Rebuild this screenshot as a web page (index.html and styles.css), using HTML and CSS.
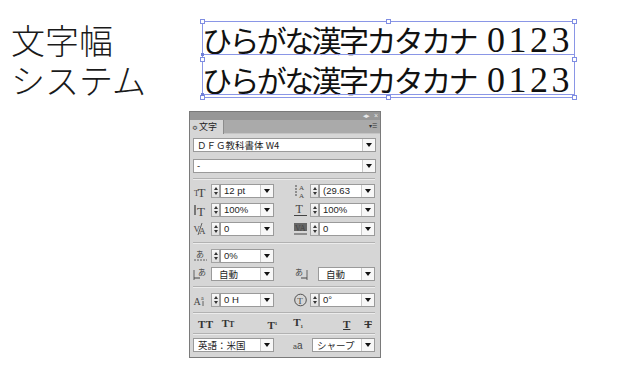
FILE: index.html
```html
<!DOCTYPE html>
<html lang="ja">
<head>
<meta charset="utf-8">
<link rel="stylesheet" href="styles.css">
</head>
<body>
<div class="page">
  <div class="top">
    <div class="label"><div class="lbl">文字幅</div><div class="lbl">システム</div></div>
    <div class="sample">
      <div class="line"><span class="kana">ひらがな漢字カタカナ</span><span class="num">0123</span></div>
      <div class="line"><span class="kana">ひらがな漢字カタカナ</span><span class="num">0123</span></div>
      <div class="sel">
        <div class="base b1"></div>
        <div class="base b2"></div>
        <span class="h h-tl"></span><span class="h h-tm"></span><span class="h h-tr"></span>
        <span class="h h-ml"></span><span class="h h-mr"></span>
        <span class="h h-bl"></span><span class="h h-bm"></span><span class="h h-br"></span>
        <span class="dot d1"></span><span class="dot d2"></span>
      </div>
    </div>
  </div>

  <div class="panel">
    <div class="titlebar"><span class="tb-ico">◂▸</span><span class="tb-ico">×</span></div>
    <div class="tabrow">
      <div class="tab"><span class="tab-arr">≎</span>文字</div>
      <div class="menu">▾☰</div>
    </div>
    <div class="body">
      <div class="sec sec-a">
        <div class="field wide"><span class="val cjk">ＤＦＧ教科書体 W4</span><span class="btn"><i class="tri"></i></span></div>
        <div class="field wide"><span class="val">-</span><span class="btn"><i class="tri"></i></span></div>
      </div>
      <div class="sep"></div>
      <div class="sec sec-b">
        <div class="row">
          <div class="half">
            <svg class="ico" viewBox="0 0 15 14"><text x="1" y="12" font-size="8">T</text><text x="4.5" y="13" font-size="13">T</text></svg>
            <span class="spin"><i class="up"></i><i class="dn"></i></span>
            <div class="field f-l"><span class="val">12 pt</span><span class="btn"><i class="tri"></i></span></div>
          </div>
          <div class="half">
            <svg class="ico" viewBox="0 0 15 14"><text x="6" y="6" font-size="7">A</text><text x="6" y="13.5" font-size="7">A</text><line x1="3" y1="1" x2="3" y2="13" stroke="#444" stroke-width="1" stroke-dasharray="2 1"/></svg>
            <span class="spin"><i class="up"></i><i class="dn"></i></span>
            <div class="field f-r"><span class="val">(29.63</span><span class="btn"><i class="tri"></i></span></div>
          </div>
        </div>
        <div class="row">
          <div class="half">
            <svg class="ico" viewBox="0 0 15 14"><line x1="2" y1="2" x2="2" y2="12" stroke="#444" stroke-width="1.3"/><text x="4" y="13" font-size="13">T</text></svg>
            <span class="spin"><i class="up"></i><i class="dn"></i></span>
            <div class="field f-l"><span class="val">100%</span><span class="btn"><i class="tri"></i></span></div>
          </div>
          <div class="half">
            <svg class="ico" viewBox="0 0 15 14"><text x="2.5" y="10" font-size="12">T</text><line x1="1" y1="12.5" x2="14" y2="12.5" stroke="#444" stroke-width="1"/></svg>
            <span class="spin"><i class="up"></i><i class="dn"></i></span>
            <div class="field f-r"><span class="val">100%</span><span class="btn"><i class="tri"></i></span></div>
          </div>
        </div>
        <div class="row">
          <div class="half">
            <svg class="ico" viewBox="0 0 15 14"><text x="0.5" y="10" font-size="9" font-family="Liberation Sans">V</text><text x="6" y="12" font-size="9" font-family="Liberation Sans">A</text><line x1="5" y1="13" x2="9" y2="1" stroke="#444" stroke-width="0.8"/></svg>
            <span class="spin"><i class="up"></i><i class="dn"></i></span>
            <div class="field f-l"><span class="val">0</span><span class="btn"><i class="tri"></i></span></div>
          </div>
          <div class="half">
            <svg class="ico" viewBox="0 0 15 14"><rect x="1" y="1" width="13" height="8" fill="#666"/><text x="2" y="8.5" font-size="8" font-family="Liberation Sans" fill="#fff">VA</text><line x1="1" y1="12" x2="14" y2="12" stroke="#444" stroke-width="1"/></svg>
            <span class="spin"><i class="up"></i><i class="dn"></i></span>
            <div class="field f-r"><span class="val">0</span><span class="btn"><i class="tri"></i></span></div>
          </div>
        </div>
      </div>
      <div class="sep"></div>
      <div class="sec sec-c">
        <div class="row">
          <div class="half">
            <svg class="ico" viewBox="0 0 15 14"><text x="3" y="8" font-size="8" class="cj">あ</text><line x1="1" y1="11" x2="14" y2="11" stroke="#444" stroke-width="0.8" stroke-dasharray="2 1"/></svg>
            <span class="spin"><i class="up"></i><i class="dn"></i></span>
            <div class="field f-l"><span class="val">0%</span><span class="btn"><i class="tri"></i></span></div>
          </div>
        </div>
        <div class="row">
          <div class="half">
            <svg class="ico" viewBox="0 0 15 14"><text x="5" y="8" font-size="8" class="cj">あ</text><line x1="1" y1="11" x2="7" y2="11" stroke="#444" stroke-width="1"/><line x1="1" y1="3" x2="1" y2="13" stroke="#444" stroke-width="0.8"/></svg>
            <div class="field f-dl"><span class="val cjk pad">自動</span><span class="btn"><i class="tri"></i></span></div>
          </div>
          <div class="half">
            <svg class="ico" viewBox="0 0 15 14"><text x="2" y="8" font-size="8" class="cj">あ</text><line x1="8" y1="11" x2="14" y2="11" stroke="#444" stroke-width="1"/><line x1="14" y1="3" x2="14" y2="13" stroke="#444" stroke-width="0.8"/></svg>
            <div class="field f-dr"><span class="val cjk pad">自動</span><span class="btn"><i class="tri"></i></span></div>
          </div>
        </div>
      </div>
      <div class="sep"></div>
      <div class="sec sec-d">
        <div class="row">
          <div class="half">
            <svg class="ico" viewBox="0 0 15 14"><text x="0.5" y="12" font-size="10" font-family="Liberation Sans">A</text><text x="8" y="7" font-size="6" font-family="Liberation Sans">a</text><line x1="10" y1="8" x2="10" y2="13" stroke="#444" stroke-width="0.8"/></svg>
            <span class="spin"><i class="up"></i><i class="dn"></i></span>
            <div class="field f-l"><span class="val">0 H</span><span class="btn"><i class="tri"></i></span></div>
          </div>
          <div class="half">
            <svg class="ico" viewBox="0 0 15 14"><circle cx="7.5" cy="7" r="5.8" fill="none" stroke="#444" stroke-width="0.9"/><text x="4.3" y="10.5" font-size="9">T</text></svg>
            <span class="spin"><i class="up"></i><i class="dn"></i></span>
            <div class="field f-r"><span class="val">0°</span><span class="btn"><i class="tri"></i></span></div>
          </div>
        </div>
      </div>
      <div class="sep"></div>
      <div class="sec sec-e">
        <div class="styles">
          <span class="st s1">TT</span>
          <span class="st s2">T<small>T</small></span>
          <span class="st s3">T<sup>1</sup></span>
          <span class="st s4">T<sub>1</sub></span>
          <span class="st s5">T</span>
          <span class="st s6">T</span>
        </div>
      </div>
      <div class="sep"></div>
      <div class="sec sec-f">
        <div class="row">
          <div class="field f-lang"><span class="val cjk pad2">英語：米国</span><span class="btn"><i class="tri"></i></span></div>
          <span class="aa">a<span class="aa2">a</span></span>
          <div class="field f-aa"><span class="val cjk pad2">シャープ</span><span class="btn"><i class="tri"></i></span></div>
        </div>
      </div>
    </div>
  </div>
</div>
</body>
</html>
```

FILE: styles.css
```css
* { box-sizing: border-box; }
html, body { margin: 0; padding: 0; background: #fff; }
body { width: 640px; height: 366px; overflow: hidden; font-family: "Liberation Sans", "Noto Sans CJK JP", sans-serif; }

.page { display: flex; flex-direction: column; }

.top { display: flex; height: 111px; }

.label {
  margin: 20px 0 0 11px;
  width: 191px;
  font-family: "Noto Sans CJK JP", sans-serif;
  font-weight: 300;
  font-size: 34px;
  color: #1a1a1a;
}
.lbl { height: 40px; line-height: 40px; white-space: nowrap; }

.sample { position: relative; margin-top: 19px; }
.line { height: 40px; line-height: 40px; white-space: nowrap; color: #111; }
.kana {
  font-family: "Noto Sans CJK JP", sans-serif;
  font-size: 30px;
  letter-spacing: -2.6px;
}
.num {
  font-family: "Liberation Serif", serif;
  font-size: 36px;
  letter-spacing: 3.5px;
  margin-left: 11px;
}

.sel {
  position: absolute;
  left: 0; top: 2px;
  width: 373px; height: 77px;
  border: 1px solid #8a96e6;
}
.base { position: absolute; left: 0; right: 0; height: 1px; background: #8a96e6; }
.b1 { top: 32px; }
.b2 { top: 72px; }
.h {
  position: absolute; width: 5px; height: 5px;
  background: #fff; border: 1px solid #7f8de2;
}
.h-tl { left: -3px; top: -3px; }
.h-tm { left: 183px; top: -3px; }
.h-tr { right: -3px; top: -3px; }
.h-ml { left: -3px; top: 35px; }
.h-mr { right: -3px; top: 35px; }
.h-bl { left: -3px; bottom: -3px; }
.h-bm { left: 183px; bottom: -3px; }
.h-br { right: -3px; bottom: -3px; }
.dot { position: absolute; left: -2px; width: 3px; height: 3px; background: #6f7fd8; }
.d1 { top: 31px; }
.d2 { top: 71px; }

/* Panel */
.panel {
  margin-left: 189px;
  width: 192px;
  height: 247px;
  border: 1px solid #7a7a7a;
  background: #d6d6d6;
  display: flex;
  flex-direction: column;
}
.titlebar {
  height: 8px;
  background: #979797;
  display: flex;
  justify-content: flex-end;
  align-items: center;
  gap: 5px;
  padding-right: 3px;
}
.tb-ico { font-size: 7px; line-height: 8px; color: #e8e8e8; letter-spacing: -1px; }
.tabrow {
  height: 14px;
  background: #aaaaaa;
  display: flex;
  justify-content: space-between;
  border-bottom: 1px solid #c4c4c4;
}
.tab {
  width: 34px;
  height: 14px;
  background: #d6d6d6;
  font-family: "Noto Sans CJK JP", sans-serif;
  font-size: 9px;
  line-height: 14px;
  color: #222;
  padding-left: 2px;
  border-right: 1px solid #8c8c8c;
}
.tab-arr { font-size: 7px; margin-right: 1px; }
.menu { font-size: 6px; line-height: 12px; color: #333; padding-right: 3px; }

.body { flex: 1; padding: 0 5px 0 3px; }

.sec { display: flex; flex-direction: column; }
.sec-a { padding: 4px 0 5px; gap: 7px; }
.sec-b { padding: 4px 0 6px; gap: 5px; }
.sec-c { padding: 5px 0 5px; gap: 4px; }
.sec-d { padding: 5px 0 5px; }
.sec-e { padding: 4px 0 3px; }
.sec-f { padding: 3px 0 0; }

.sep { height: 2px; border-top: 1px solid #b2b2b2; border-bottom: 1px solid #ececec; }

.row { display: flex; align-items: center; height: 14px; }
.half { display: flex; align-items: center; width: 100px; height: 14px; }
.half + .half { width: 82px; }

.ico { width: 15px; height: 14px; flex: none; overflow: visible; }
.ico text { font-family: "Liberation Serif", serif; fill: #444; }
.ico text.cj { font-family: "Noto Sans CJK JP", sans-serif; }

.spin {
  flex: none;
  width: 9px; height: 14px;
  margin-left: 3px;
  border: 1px solid #a3a3a3;
  background: linear-gradient(#fafafa, #dedede);
  display: flex; flex-direction: column; align-items: center; justify-content: center; gap: 2px;
}
.half + .half .spin { margin-left: 2px; }
.up, .dn { width: 0; height: 0; border-left: 2.5px solid transparent; border-right: 2.5px solid transparent; }
.up { border-bottom: 3px solid #333; }
.dn { border-top: 3px solid #333; }

.field {
  display: flex;
  height: 14px;
  border: 1px solid #9a9a9a;
  background: #fff;
  flex: none;
}
.wide { width: 183px; }
.f-l { width: 54px; }
.f-r { width: 56px; }
.f-dl { width: 63px; margin-left: 3px; }
.f-dr { width: 57px; margin-left: 10px; }
.f-lang { width: 81px; margin-left: 0; }
.f-aa { width: 63px; }

.val {
  flex: 1;
  font-size: 9.5px;
  line-height: 12px;
  padding-left: 3px;
  color: #1e1e1e;
  white-space: nowrap;
  overflow: hidden;
}
.val.cjk { font-family: "Noto Sans CJK JP", sans-serif; font-size: 9.5px; }
.pad { padding-left: 7px; }
.pad2 { padding-left: 4px; }
.btn {
  width: 13px;
  border-left: 1px solid #c9c9c9;
  background: #f7f7f7;
  display: flex; align-items: center; justify-content: center;
}
.tri { width: 0; height: 0; border-left: 3px solid transparent; border-right: 3px solid transparent; border-top: 4px solid #111; }

.styles {
  display: flex;
  align-items: center;
  height: 12px;
  font-family: "Liberation Serif", serif;
  font-weight: bold;
  font-size: 11px;
  color: #333;
}
.st { line-height: 12px; }
.s1 { margin-left: 5px; letter-spacing: 0.5px; }
.s2 { margin-left: 8px; }
.s2 small { font-size: 8px; }
.s3 { margin-left: 33px; }
.s3 sup { font-size: 5px; vertical-align: 4px; }
.s4 { margin-left: 16px; }
.s4 sub { font-size: 5px; vertical-align: -2px; }
.s5 { margin-left: 40px; text-decoration: underline; }
.s6 { margin-left: 14px; text-decoration: line-through; }

.aa {
  margin-left: 19px;
  width: 19px;
  font-family: "Liberation Sans", sans-serif;
  font-size: 7px;
  color: #444;
}
.aa2 { font-size: 10px; }
```
